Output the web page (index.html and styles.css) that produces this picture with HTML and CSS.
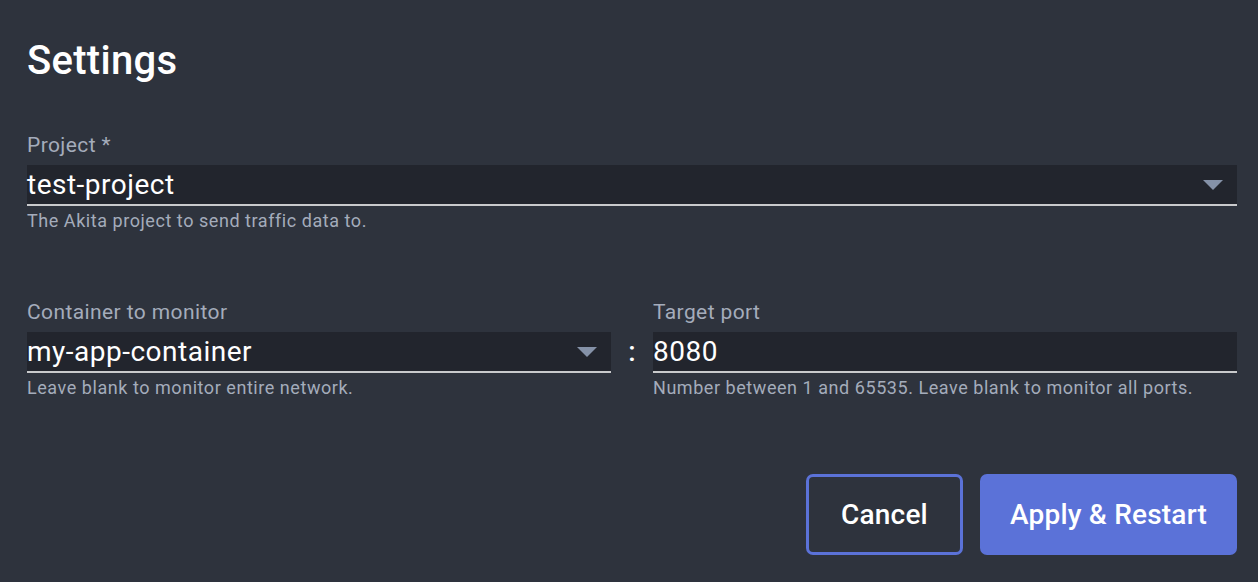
FILE: index.html
```html
<!DOCTYPE html>
<html>
<head>
<meta charset="utf-8">
<link rel="stylesheet" href="styles.css">
</head>
<body>
<div class="page">
  <h1 class="title">Settings</h1>
  <div class="field">
    <label class="label">Project *</label>
    <div class="input select">
      <span class="value">test-project</span>
      <svg class="caret" width="20" height="10" viewBox="0 0 20 10"><path d="M0 0 H20 L10 10 Z" fill="#8592a8"/></svg>
    </div>
    <div class="helper">The Akita project to send traffic data to.</div>
  </div>
  <div class="row">
    <div class="field grow">
      <label class="label">Container to monitor</label>
      <div class="input select">
        <span class="value">my-app-container</span>
        <svg class="caret" width="20" height="10" viewBox="0 0 20 10"><path d="M0 0 H20 L10 10 Z" fill="#8592a8"/></svg>
      </div>
      <div class="helper">Leave blank to monitor entire network.</div>
    </div>
    <div class="colon">:</div>
    <div class="field grow">
      <label class="label">Target port</label>
      <div class="input">
        <span class="value">8080</span>
      </div>
      <div class="helper">Number between 1 and 65535. Leave blank to monitor all ports.</div>
    </div>
  </div>
  <div class="actions">
    <button class="btn btn-outline">Cancel</button>
    <button class="btn btn-primary">Apply &amp; Restart</button>
  </div>
</div>
</body>
</html>
```
FILE: styles.css
```css
html, body {
  margin: 0;
  padding: 0;
  background: #2e333d;
  height: 100%;
}
body {
  font-family: Roboto, "Liberation Sans", sans-serif;
  color: #ffffff;
}
.page {
  padding: 37px 21px 0 27px;
}
.title {
  margin: 0;
  font-size: 40px;
  font-weight: 500;
  line-height: 48px;
  letter-spacing: 0.3px;
}
.field {
  display: flex;
  flex-direction: column;
}
.page > .field {
  margin-top: 50px;
}
.label {
  font-size: 21px;
  line-height: 20px;
  height: 30px;
  color: #a4acbb;
  letter-spacing: 0.4px;
}
.input {
  height: 39px;
  background: #22252d;
  border-bottom: 2px solid #c9cacc;
  display: flex;
  align-items: center;
  justify-content: space-between;
}
.value {
  font-size: 28px;
  line-height: 38px;
  color: #ffffff;
  letter-spacing: 0.5px;
}
.caret {
  margin-right: 14px;
  display: block;
}
.helper {
  font-size: 18px;
  line-height: 22px;
  color: #a4acbb;
  margin-top: 4px;
  letter-spacing: 0.55px;
}
.row {
  display: flex;
  align-items: flex-start;
  margin-top: 70px;
}
.grow {
  flex: 1 1 0;
}
.colon {
  width: 42px;
  text-align: center;
  font-size: 28px;
  font-weight: 500;
  line-height: 36px;
  margin-top: 32px;
  color: #ffffff;
}
.actions {
  display: flex;
  justify-content: flex-end;
  gap: 17px;
  margin-top: 75px;
}
.btn {
  font-family: Roboto, "Liberation Sans", sans-serif;
  font-size: 28px;
  font-weight: 500;
  letter-spacing: 0.2px;
  color: #ffffff;
  height: 81px;
  border-radius: 7px;
  cursor: pointer;
  padding: 0;
}
.btn-outline {
  width: 157px;
  background: #2e333d;
  border: 3px solid #5b72d8;
}
.btn-primary {
  width: 257px;
  background: #5b72d8;
  border: none;
}
```
